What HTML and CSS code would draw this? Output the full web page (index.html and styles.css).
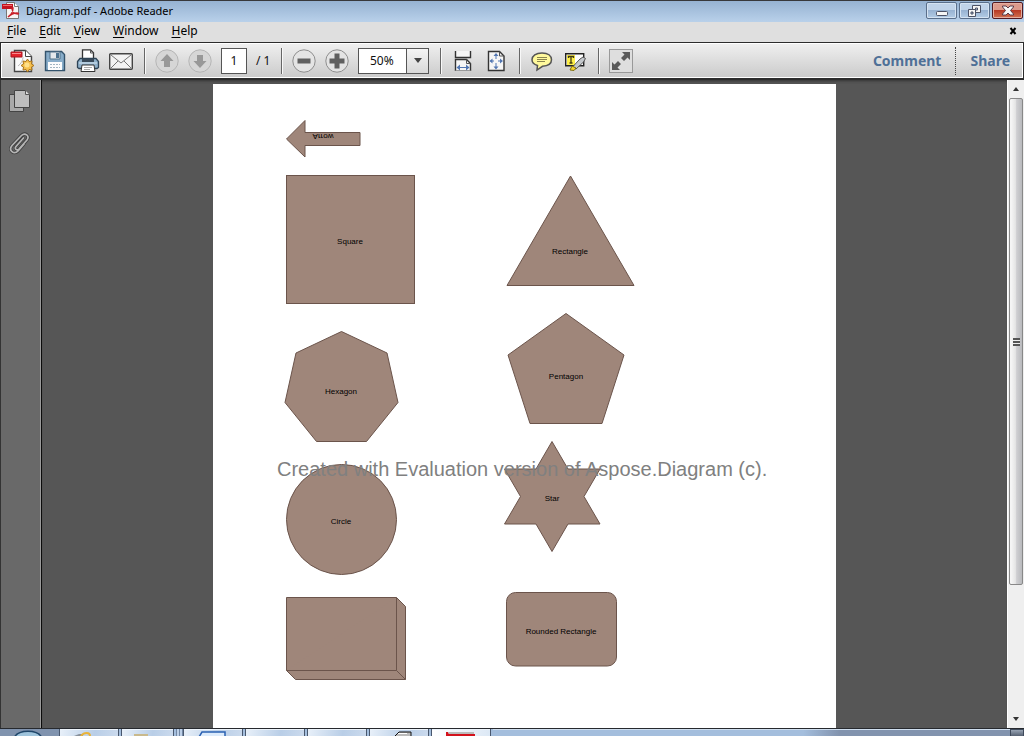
FILE: index.html
```html
<!DOCTYPE html>
<html lang="en">
<head>
<meta charset="utf-8">
<title>Diagram.pdf - Adobe Reader</title>
<link rel="stylesheet" href="styles.css">
</head>
<body>
<div class="app">
  <header class="titlebar">
    <svg class="app-icon" width="18" height="18" viewBox="0 0 18 18" aria-hidden="true">
      <path d="M4.500 .5h8l4 4v12h-12z" fill="#f7f4f4" stroke="#777"/>
      <path d="M12.500 .5v4h4" fill="#fff" stroke="#777"/>
      <path d="M0 2h11v5H0z" fill="#c41420"/>
      <path d="M1 3h9v1H1z" fill="#f06a6c"/>
      <path d="M6 15c3-2 5-6 5-9 0-1-1.500-1-1 1 .5 3 3 5 6 5 1 0 .5-1-1-1-3 0-6 1-9 4z" fill="none" stroke="#c8202a" stroke-width="1.400"/>
    </svg>
    <h1 class="title">Diagram.pdf - Adobe Reader</h1>
    <div class="window-buttons">
      <button class="win" type="button" aria-label="Minimize"><svg width="12" height="12" viewBox="0 0 12 12"><rect x=".5" y="6.500" width="11" height="4" rx="1" fill="#f5f5f5" stroke="#4c5266"/></svg></button>
      <button class="win" type="button" aria-label="Restore"><svg width="13" height="12" viewBox="0 0 13 12"><path fill-rule="evenodd" d="M4.500 .5h8v7h-8zM7.500 3v2h2V3z" fill="#f5f5f5" stroke="#4c5266"/><path fill-rule="evenodd" d="M.5 4.500h7v7h-7zM3 7v2h2V7z" fill="#f5f5f5" stroke="#4c5266"/></svg></button>
      <button class="win win-close" type="button" aria-label="Close"><svg width="12" height="11" viewBox="0 0 12 11"><path d="M.5 1h3.500l2 2 2-2h3.500v1l-3 3.500 3 3.500v1H8L6 8l-2 2H.5V9l3-3.500-3-3.500z" fill="#f7f7f7" stroke="#5a3b48"/></svg></button>
    </div>
  </header>

  <nav class="menubar" aria-label="Menu">
    <button class="menu" type="button"><u>F</u>ile</button>
    <button class="menu" type="button"><u>E</u>dit</button>
    <button class="menu" type="button"><u>V</u>iew</button>
    <button class="menu" type="button"><u>W</u>indow</button>
    <button class="menu" type="button"><u>H</u>elp</button>
    <button class="doc-close" type="button" aria-label="Close document"><svg width="8" height="8" viewBox="0 0 8 8"><path d="M1.500 1l5 6M6.500 1l-5 6" stroke="#000" stroke-width="2"/></svg></button>
  </nav>

  <div class="toolbar" role="toolbar" aria-label="Tools">
    <div class="group">
      <button class="tool" type="button" aria-label="Create PDF"><svg width="24" height="24" viewBox="0 0 24 24">
        <path d="M4.500 1.500h11l6 6v15h-17z" fill="#fafafa" stroke="#454545" stroke-width="1.400"/><path d="M15.500 1.500v6h6" fill="#fff" stroke="#454545"/>
        <path d="M8 17c3-2 5-6 5-9" fill="none" stroke="#bbb"/>
        <path d="M1 3h11v5H1z" fill="#e4232c" stroke="#a91720"/><path d="M2 4h9v1H2z" fill="#f98a8d"/>
        <path d="M17.500 10l1.500 2.500 3-.5-.5 3 2.500 1.500-2.500 1.500.5 3-3-.5-1.500 2.500-1.500-2.500-3 .5.5-3-2.500-1.500 2.500-1.500-.5-3 3 .5z" fill="#f7c04c" stroke="#a8731c"/><circle cx="17" cy="16" r="2.500" fill="#ffe08a"/></svg></button>
      <button class="tool" type="button" aria-label="Save"><svg width="24" height="24" viewBox="0 0 24 24">
        <path d="M2.500 2.500h16l3 3v16h-19z" fill="#87acc9" stroke="#34536c" stroke-width="1.400"/><path d="M7 3h10v7H7z" fill="#e5e9ec" stroke="#53728a"/><path d="M13 4h3v5h-3z" fill="#4d718d"/>
        <path d="M5 13h14v8H5z" fill="#fbfcfd"/><path d="M7 15.500h10M7 18.500h10" stroke="#a1b5c3" stroke-dasharray="2 1"/></svg></button>
      <button class="tool" type="button" aria-label="Print"><svg width="24" height="24" viewBox="0 0 24 24">
        <path d="M6.500 11V.8h8l3 3V11z" fill="#fff" stroke="#333" stroke-width="1.300"/><path d="M14.500 1v3h3" fill="none" stroke="#555"/>
        <path d="M4 9.500h16l2.500 3v6l-1.500 1H3l-1.500-1v-6z" fill="#8eafc9" stroke="#2e4355" stroke-width="1.300"/><path d="M6 10h12v3H6z" fill="#384959"/><path d="M3 14h18" stroke="#d9e8f3"/>
        <path d="M6 16h12l1 6.500H5z" fill="#fff" stroke="#333"/><path d="M8 18.500h8M8 20.500h6" stroke="#aaa"/></svg></button>
      <button class="tool" type="button" aria-label="Email"><svg width="24" height="24" viewBox="0 0 24 24">
        <rect x=".7" y="4.700" width="22.600" height="15.600" rx="1" fill="#f3f3f3" stroke="#444" stroke-width="1.400"/><path d="M2 6l10 8 10-8M2 19l7-7M22 19l-7-7" fill="none" stroke="#777"/></svg></button>
    </div>
    <span class="sep"></span>
    <div class="group">
      <button class="tool" type="button" aria-label="Previous page" disabled><svg width="24" height="24" viewBox="0 0 24 24"><circle cx="12" cy="12" r="11.200" fill="#d6d6d6" stroke="#b5b5b5"/><path d="M12 5l6.500 7H15v6H9v-6H5.500z" fill="#989898"/></svg></button>
      <button class="tool" type="button" aria-label="Next page" disabled><svg width="24" height="24" viewBox="0 0 24 24"><circle cx="12" cy="12" r="11.200" fill="#d6d6d6" stroke="#b5b5b5"/><path d="M12 19l6.500-7H15V6H9v6H5.500z" fill="#989898"/></svg></button>
      <input class="page-input" type="text" value="1" aria-label="Page number">
      <span class="page-count">/ 1</span>
    </div>
    <span class="sep"></span>
    <div class="group">
      <button class="tool" type="button" aria-label="Zoom out"><svg width="24" height="24" viewBox="0 0 24 24"><circle cx="12" cy="12" r="11.200" fill="#e4e4e4" stroke="#8e8e8e"/><path d="M5.500 9.500h13v5h-13z" fill="#606060"/></svg></button>
      <button class="tool" type="button" aria-label="Zoom in"><svg width="24" height="24" viewBox="0 0 24 24"><circle cx="12" cy="12" r="11.200" fill="#e4e4e4" stroke="#8e8e8e"/><path d="M9.500 4.500h5v5h5v5h-5v5h-5v-5h-5v-5h5z" fill="#606060"/></svg></button>
      <div class="zoom-box">
        <select class="zoom" aria-label="Zoom level"><option>50%</option></select>
        <span class="zoom-arrow"><svg width="8" height="5" viewBox="0 0 8 5"><path d="M0 0h8L4 5z" fill="#444"/></svg></span>
      </div>
    </div>
    <span class="sep"></span>
    <div class="group">
      <button class="tool" type="button" aria-label="Fit width"><svg width="24" height="24" viewBox="0 0 24 24">
        <path d="M4.500 2v6.500h15V2" fill="#f6f6f6" stroke="#333" stroke-width="1.400"/><path d="M4.500 22V10.500h11l4 4V22" fill="#f6f6f6" stroke="#333" stroke-width="1.400"/><path d="M15.500 10.500v4h4" fill="none" stroke="#555"/>
        <path d="M4.500 21.500h15" stroke="#999"/><path d="M7 18.500h10" stroke="#5377b2"/><path d="M5.500 18.500l3.500-3v6zM18.500 18.500l-3.500-3v6z" fill="#5377b2"/></svg></button>
      <button class="tool" type="button" aria-label="Fit page"><svg width="24" height="24" viewBox="0 0 24 24">
        <path d="M4.500 2.500h11l4.500 4.500v14.500H4.500z" fill="#f6f6f6" stroke="#333" stroke-width="1.400"/><path d="M15.500 2.500V7H20" fill="none" stroke="#555"/>
        <path d="M12 5v5M12 14v5M6 12h4M14 12h4" stroke="#5377b2"/><path d="M12 4l2.500 3h-5zM12 20.500L9.500 17.500h5zM5.500 12l3-2.500v5zM19 12l-3-2.500v5z" fill="#5377b2"/></svg></button>
    </div>
    <span class="sep"></span>
    <div class="group">
      <button class="tool" type="button" aria-label="Add comment"><svg width="24" height="24" viewBox="0 0 24 24">
        <path d="M12 4c6 0 9.500 2.800 9.500 6.800S18 17 12.500 17.300L7 21l.5-4.500C4 15.500 2 13.500 2 10.800 2 6.800 6 4 12 4z" fill="#fff99c" stroke="#555" stroke-width="1.500"/><path d="M7 8.500h10M7 10.500h10M7 12.500h8" stroke="#8a8550"/></svg></button>
      <button class="tool" type="button" aria-label="Highlight text"><svg width="24" height="24" viewBox="0 0 24 24">
        <path d="M2.700 4.700h18v12h-18z" fill="#fff" stroke="#222" stroke-width="1.400"/><path d="M4 6h8v10H4z" fill="#fff04a"/><path d="M5.500 9V7.500h5V9M8 7.500v6M6.500 14h3" fill="none" stroke="#403b15" stroke-width="1.300"/>
        <path d="M9 18.500l8-8.500 3-2 2.500 1.500-2 3.500-7.500 7z" fill="#c4c8cc" stroke="#555"/><path d="M7 21l2-4 4 2-2 2.500z" fill="#f6d52e" stroke="#806f13"/></svg></button>
    </div>
    <span class="sep"></span>
    <button class="tool" type="button" aria-label="Read mode"><svg width="24" height="24" viewBox="0 0 24 24">
      <rect x=".5" y=".5" width="23" height="23" fill="#dedede" stroke="#999"/><path d="M13 3h8v8l-2.500-2.500L15 12l-3-3 3.500-3.500zM3 21v-8l2.500 2.500L9 12l3 3-3.500 3.500L11 21z" fill="#5a5a5a"/></svg></button>
    <div class="panes">
      <button class="pane" type="button">Comment</button>
      <button class="pane pane-share" type="button">Share</button>
    </div>
  </div>

  <main class="workspace">
    <aside class="sidebar">
      <button class="side" type="button" aria-label="Page thumbnails"><svg width="22" height="24" viewBox="0 0 22 24"><path d="M.5 5.500h14v17H.5z" fill="#a9a9a9" stroke="#444"/><path d="M5.500 1.500h11l4 4v13h-15z" fill="#bdbdbd" stroke="#444"/><path d="M16.500 1.500v4h4" fill="#ddd" stroke="#555"/></svg></button>
      <button class="side" type="button" aria-label="Attachments"><svg width="22" height="24" viewBox="0 0 22 24"><g fill="none" stroke-linecap="round"><path d="M14.500 7L7 15.500c-2 2.500 1 4.500 3 2.500l8-9c3-4-2-8-5.500-4.500L3 14.500c-4 5 2 9.500 6 5.500l6-7" stroke="#404040" stroke-width="3.400"/><path d="M14.500 7L7 15.500c-2 2.500 1 4.500 3 2.500l8-9c3-4-2-8-5.500-4.500L3 14.500c-4 5 2 9.500 6 5.500l6-7" stroke="#b5b5b5" stroke-width="1.700"/></g></svg></button>
    </aside>
    <section class="viewer" aria-label="Document">
      <svg class="sheet" width="623" height="644" viewBox="213 84 623 644" role="img" aria-label="Shapes diagram">
        <g class="shape">
          <path d="M286.500 139L305 120.500v12h55v13h-55V157z"/>
          <rect x="286.500" y="175.500" width="128" height="128"/>
          <path d="M570.500 176L634 285.500H507z"/>
          <path d="M341.500 331.500L387 353l11 49.500-31.500 39h-50L285 402.500 296 353z"/>
          <path d="M566 313.500L624 355l-22 68.500h-72L508 355z"/>
          <path d="M552 441.500L568 469h32l-16 27.500 16 27.500h-32l-16 27.500L536 524h-31.500l16-27.500-16-27.500H536z"/>
          <circle cx="341.500" cy="519.500" r="55"/>
          <path d="M286.500 597.500h110l9 9v73h-110l-9-9z"/>
          <path d="M396.500 597.500v73h-110M396.500 670.500l9 9"/>
          <rect x="506.500" y="592.500" width="110" height="73.500" rx="9"/>
        </g>
        <g class="label">
          <text transform="translate(323 134) scale(1 -1)">Arrow</text>
          <text x="350" y="244">Square</text>
          <text x="570" y="254">Rectangle</text>
          <text x="341" y="394">Hexagon</text>
          <text x="566" y="379">Pentagon</text>
          <text x="552" y="501">Star</text>
          <text x="341" y="524">Circle</text>
          <text x="561" y="634">Rounded Rectangle</text>
        </g>
        <text class="watermark" x="277" y="476">Created with Evaluation version of Aspose.Diagram (c).</text>
      </svg>
    </section>
    <div class="scrollbar" aria-hidden="true">
      <span class="scroll-end"><svg width="6" height="4" viewBox="0 0 6 4"><path d="M0 4h6L3 0z" fill="#333"/></svg></span>
      <span class="thumb"><i class="grip"></i></span>
      <span class="rest"></span>
      <span class="scroll-end"><svg width="6" height="4" viewBox="0 0 6 4"><path d="M0 0h6L3 4z" fill="#333"/></svg></span>
    </div>
  </main>

  <footer class="taskbar" aria-hidden="true">
    <span class="start"><svg width="30" height="7" viewBox="0 0 30 7"><path d="M1 9C5 0 25 0 29 9z" fill="#9fc4dc" stroke="#1f4669" stroke-width="1.500"/></svg></span>
    <span class="task"><svg width="30" height="7" viewBox="0 0 30 7"><path d="M0 7l5-2h4v2z" fill="#89919b"/><path d="M7 7c3-4 9-4 9 0" fill="none" stroke="#e9b33a" stroke-width="2"/></svg></span>
    <span class="task task-short"><svg width="30" height="7" viewBox="0 0 30 7"><path d="M1 5h14v2H1z" fill="#c9b98c"/></svg></span>
    <span class="divider"></span>
    <span class="task"><svg width="30" height="7" viewBox="0 0 30 7"><path d="M1 8l3-5h23v5z" fill="#dcebfb" stroke="#2a61b3" stroke-width="1.500"/></svg></span>
    <span class="task"></span>
    <span class="task"></span>
    <span class="task"><svg width="30" height="7" viewBox="0 0 30 7"><path d="M10 8l5-5h12v5z" fill="#bbb" stroke="#111"/><path d="M14 4.500h9" stroke="#fff"/></svg></span>
    <span class="task task-active"><svg width="30" height="7" viewBox="0 0 30 7"><path d="M0 3h2l1 2h26v2H0z" fill="#d3121c"/><path d="M2 3h26v2H3z" fill="#bbb"/></svg></span>
    <span class="tray"></span>
    <span class="desktop"></span>
  </footer>
</div>
</body>
</html>
```

FILE: styles.css
```css
* { box-sizing: border-box; }
html, body { height: 100%; }
body { margin: 0; font-family: "Noto Sans", "Open Sans", sans-serif; font-size: 12px; color: #000; overflow: hidden; }
button { margin: 0; padding: 0; border: 0; background: none; font: inherit; color: inherit; }
svg { display: block; flex: none; }

.app { display: flex; flex-direction: column; height: 100vh; }

.titlebar { display: flex; align-items: flex-start; height: 22px; flex: none; padding: 1px 1px 0 2px; border-top: 1px solid #37383b; background: linear-gradient(#96b2d2, #b9d1ea); }
.title { flex: 1; margin: 0 0 0 6px; font-size: 11px; font-weight: 400; line-height: 18px; }
.window-buttons { display: flex; gap: 2px; }
.win { display: flex; align-items: center; justify-content: center; width: 31px; height: 17px; border: 1px solid #5a6f8b; border-radius: 2px; background: linear-gradient(#c0d3e9 45%, #98b3d2 50%, #b3cce6); box-shadow: inset 0 0 0 1px #d5e3f2; }
.win-close { border-color: #521a22; background: linear-gradient(#dc9a8c 45%, #b83a25 50%, #d27151); box-shadow: inset 0 0 0 1px #e5aea0; }

.menubar { display: flex; align-items: center; gap: 13px; height: 20px; flex: none; padding: 0 7px 2px; background: #dfdfdf; }
.menu { line-height: 18px; }
.menu u { text-underline-offset: 2px; }
.doc-close { margin-left: auto; }

.toolbar { display: flex; align-items: center; height: 38px; flex: none; padding: 0 13px 0 9px; border: 1px solid #2c2c2c; border-width: 1px 1px 2px; background: linear-gradient(#f0f0f0, #cacaca); box-shadow: inset 0 0 0 1px #fff; }
.group { display: flex; align-items: center; gap: 9px; }
.tool { width: 24px; height: 24px; flex: none; }
.sep { width: 2px; height: 26px; margin: 0 9px 0 11px; border-left: 1px solid #666; border-right: 1px solid #f8f8f8; flex: none; }
.page-input { width: 26px; height: 26px; padding: 0; border: 1px solid #555; background: #fff; font: inherit; text-align: center; }
.page-count { width: 14px; white-space: nowrap; }
.page-count, .page-input { color: #111; }
.zoom-box { display: flex; width: 71px; height: 26px; border: 1px solid #555; background: #fff; }
.zoom { flex: 1; min-width: 0; padding: 0 0 0 11px; border: 0; border-radius: 0; background: #fff; font: inherit; color: #111; appearance: none; }
.zoom-arrow { display: flex; align-items: center; justify-content: center; width: 22px; border-left: 1px solid #555; background: linear-gradient(#f5f5f5, #d8d8d8); pointer-events: none; }
.panes { display: flex; margin-left: auto; }
.pane { padding: 0 14px; color: #4f7097; font-size: 14px; font-weight: 700; line-height: 28px; }
.pane-share { padding-right: 0; border-left: 1px dotted #444; }

.workspace { display: flex; flex: 1; min-height: 0; background: #565656; }
.sidebar { display: flex; flex-direction: column; gap: 18px; width: 42px; flex: none; padding: 9px 8px; border-left: 1px solid #333; border-right: 1px solid #0c0c0c; background: #696969; box-shadow: inset -1px 0 #9a9a9a; }
.side { width: 22px; height: 24px; }
.viewer { display: flex; flex: 1; justify-content: center; min-width: 0; padding-top: 4px; overflow: hidden; box-shadow: inset 0 3px 3px -2px #333; }
.sheet { background: #fff; }
.shape { fill: #9f867a; stroke: #6b544b; stroke-width: 1px; }
.label { font: 8px "Liberation Sans", Arial, sans-serif; text-anchor: middle; fill: #000; }
.watermark { font: 20px "Liberation Sans", Arial, sans-serif; fill: #808080; }

.scrollbar { display: flex; flex-direction: column; width: 17px; flex: none; border-left: 1px solid #fff; background: #efefef; }
.scroll-end { display: flex; align-items: center; justify-content: center; height: 18px; flex: none; }
.thumb { display: flex; align-items: center; justify-content: center; flex: 487 1 0; margin: 0 1px; border: 1px solid #888; border-radius: 2px; background: linear-gradient(90deg, #f5f5f5 10%, #e5e5e5 45%, #cfcfd2 55%, #b9babd); }
.rest { flex: 125 1 0; }
.grip { width: 7px; height: 8px; background: repeating-linear-gradient(#555 0 2px, #eee 2px 3px); }

.taskbar { display: flex; height: 8px; flex: none; overflow: hidden; border-top: 1px solid #26292e; background: #a4bedd; }
.start { display: flex; justify-content: center; width: 59px; padding-right: 4px; background: #8093ae; flex: none; }
.task { display: flex; justify-content: center; width: 60px; margin-right: 2px; flex: none; border: 1px solid #49586e; border-width: 0 1px; background: linear-gradient(100deg, #e8f0f9, #b9cee7 60%, #cbdaed); box-shadow: inset 0 1px #edf4fb; }
.task-short { width: 53px; }
.task-active { background: linear-gradient(100deg, #fff, #dce8f5); }
.divider { width: 7px; flex: none; background: repeating-linear-gradient(90deg, #7388a5 0 1px, #bdd0e8 1px 3px); }
.tray { flex: 1; background: linear-gradient(90deg, #a4bedd 60%, #8293ae 67%); box-shadow: inset 0 1px #d0dfef; }
.desktop { width: 14px; flex: none; border: 1px solid #3e4a5b; border-bottom: 0; background: linear-gradient(#98a4b4, #566172); }
```
